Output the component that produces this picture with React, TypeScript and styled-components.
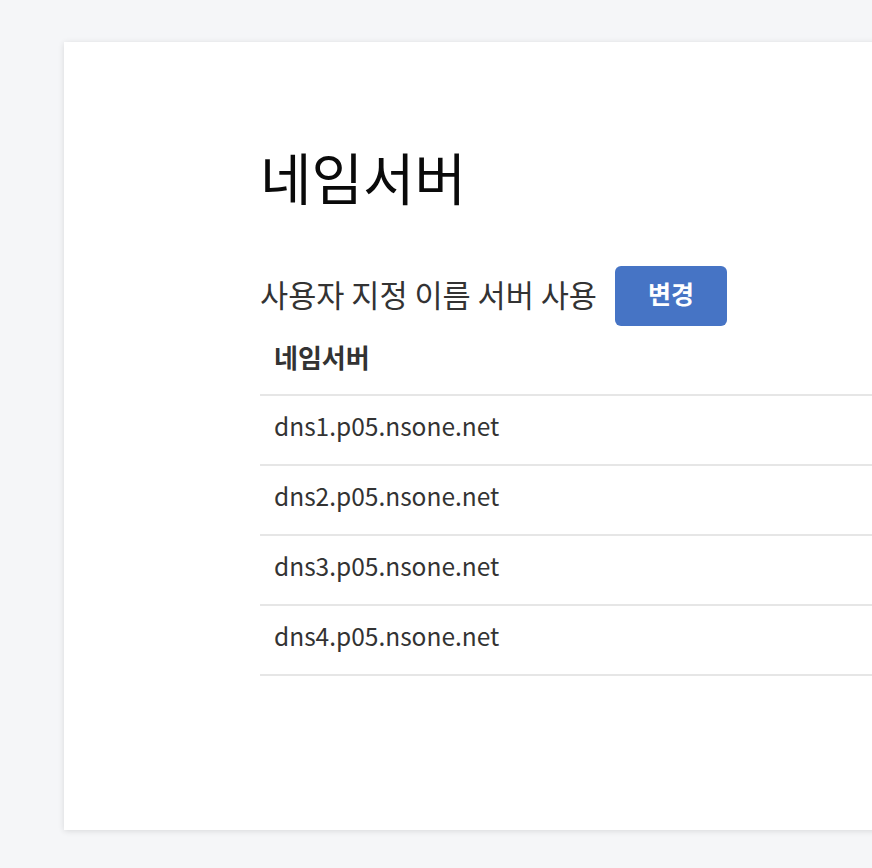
import React from "react";
import styled, { createGlobalStyle } from "styled-components";

const GlobalStyle = createGlobalStyle`
  html, body {
    margin: 0;
    padding: 0;
    background-color: #f5f6f8;
    overflow: hidden;
  }
  body {
    font-family: "Noto Sans CJK KR", "Noto Sans", sans-serif;
    color: #333;
  }
`;

const Page = styled.div`
  padding: 42px 0 38px 64px;
  width: 1200px;
`;

const Card = styled.section`
  background-color: white;
  height: 788px;
  box-shadow: 0 1px 6px rgba(0, 0, 0, 0.12);
  padding: 0 0 0 196px;
  box-sizing: border-box;
  display: flex;
  flex-direction: column;
`;

const Title = styled.h1`
  margin: 96px 0 0;
  font-size: 56px;
  font-weight: 400;
  line-height: 76px;
  color: #0a0a0a;
`;

const Toolbar = styled.div`
  margin-top: 50px;
  display: flex;
  align-items: center;
  gap: 18px;
`;

const Label = styled.span`
  font-size: 30.6px;
  line-height: 60px;
  padding-bottom: 4px;
  color: #333;
`;

const Button = styled.button`
  width: 112px;
  height: 60px;
  border: none;
  border-radius: 6px;
  background-color: #4674c5;
  color: white;
  font-family: inherit;
  font-size: 25px;
  font-weight: 700;
  padding: 0 0 6px;
  cursor: pointer;
`;

const Table = styled.table`
  width: 900px;
  border-collapse: collapse;
`;

const Cell = styled.td<{ $head?: boolean }>`
  height: ${(p) => (p.$head ? 56 : 58)}px;
  padding: 0 14px 10px;
  font-size: ${(p) => (p.$head ? 26 : 24.5)}px;
  font-weight: ${(p) => (p.$head ? 700 : 400)};
  color: #333;
  border-bottom: 2px solid #e6e6e6;
  text-align: left;
`;

const servers = [
  "dns1.p05.nsone.net",
  "dns2.p05.nsone.net",
  "dns3.p05.nsone.net",
  "dns4.p05.nsone.net",
];

const App: React.FC = () => {
  return (
    <>
      <GlobalStyle />
      <Page>
        <Card>
          <Title>네임서버</Title>
          <Toolbar>
            <Label>사용자 지정 이름 서버 사용</Label>
            <Button type="button">변경</Button>
          </Toolbar>
          <Table>
            <thead>
              <tr>
                <Cell as="th" $head>
                  네임서버
                </Cell>
              </tr>
            </thead>
            <tbody>
              {servers.map((name) => (
                <tr key={name}>
                  <Cell>{name}</Cell>
                </tr>
              ))}
            </tbody>
          </Table>
        </Card>
      </Page>
    </>
  );
};

export default App;
